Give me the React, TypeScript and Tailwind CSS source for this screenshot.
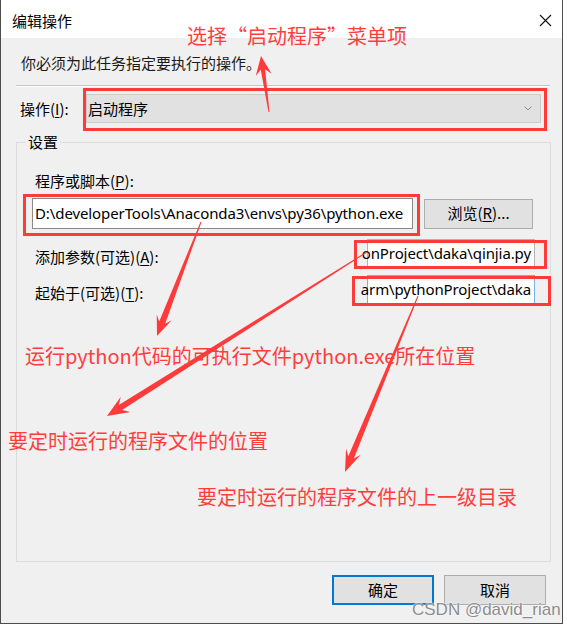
import React from 'react';

const ui = { fontFamily: '"Noto Sans CJK SC", "Noto Sans", sans-serif' };
const latin = { fontFamily: '"Noto Sans", "Noto Sans CJK SC", sans-serif' };

type Pt = [number, number];

// tapered "screenshot tool" arrow, thin tail -> thick head
function arrowPoints(t: Pt, p: Pt, head = 20, hw = 9, w0 = 0.5, w1 = 2.5) {
  const dx = p[0] - t[0];
  const dy = p[1] - t[1];
  const len = Math.hypot(dx, dy);
  const ux = dx / len;
  const uy = dy / len;
  const nx = -uy;
  const ny = ux;
  const neck: Pt = [p[0] - ux * head * 0.72, p[1] - uy * head * 0.72];
  const barb: Pt = [p[0] - ux * head, p[1] - uy * head];
  const pts: Pt[] = [
    [t[0] + nx * w0, t[1] + ny * w0],
    [neck[0] + nx * w1, neck[1] + ny * w1],
    [barb[0] + nx * hw, barb[1] + ny * hw],
    p,
    [barb[0] - nx * hw, barb[1] - ny * hw],
    [neck[0] - nx * w1, neck[1] - ny * w1],
    [t[0] - nx * w0, t[1] - ny * w0],
  ];
  return pts.map((q) => q.join(',')).join(' ');
}

const arrows = [
  { t: [269, 112] as Pt, p: [261, 56] as Pt, head: 19, hw: 8, w1: 2.2 },
  { t: [201, 222] as Pt, p: [157, 336] as Pt, head: 20, hw: 8, w1: 3.2 },
  { t: [367, 252] as Pt, p: [107, 416] as Pt, head: 22, hw: 9, w1: 3 },
  { t: [418, 296] as Pt, p: [345, 472] as Pt, head: 22, hw: 8, w1: 3 },
];

const RedBox = ({ className }: { className: string }) => (
  <span className={`pointer-events-none absolute border-[3px] border-[#ff3a3a] ${className}`} />
);

const Acc = ({ c }: { c: string }) => <u className="underline underline-offset-2">{c}</u>;

export default function App() {
  return (
    <div className="relative w-[567px] h-[625px] bg-white overflow-hidden text-[15px] text-black" style={ui}>
      {/* dialog window */}
      <div className="flex flex-col w-[563px] h-[624px] border-l border-r border-b border-[#4d4d4d]">
        {/* title bar */}
        <div className="flex items-center justify-between h-[38px] bg-white pl-[11px] pr-[10px] pt-[3px] shrink-0">
          <span className="leading-5">编辑操作</span>
          <svg width="13" height="13" viewBox="0 0 13 13">
            <path d="M1 1 L12 12 M12 1 L1 12" stroke="#111" strokeWidth="1.1" />
          </svg>
        </div>

        <div className="flex flex-col flex-1 bg-[#f0f0f0]">
          <p className="pt-[15px] pl-[20px] leading-5 text-[#1a1a1a]">你必须为此任务指定要执行的操作。</p>
          <div className="mt-[12px] ml-[15px] mr-[12px] border-t border-[#c4c4c4] border-b border-b-white" />

          {/* action dropdown */}
          <div className="flex items-center mt-[7px] pl-[19px]">
            <span className="w-[66px] leading-5">操作(<Acc c="I" />):</span>
            <div className="relative flex items-center justify-between w-[455px] h-[29px] bg-[#e1e1e1] border border-[#cccccc] pl-[1px] pr-[8px]">
              <span className="leading-5">启动程序</span>
              <svg width="8" height="5" viewBox="0 0 8 5">
                <path d="M0.5 0.5 L4 4 L7.5 0.5" stroke="#8a8a8a" fill="none" strokeWidth="1" />
              </svg>
              <RedBox className="-left-[4px] -right-[7px] -top-[7px] -bottom-[9px]" />
            </div>
          </div>

          {/* settings group */}
          <fieldset className="mt-[9px] ml-[15px] w-[535px] h-[430px] border border-[#dcdcdc] pt-[19px] shrink-0">
            <legend className="ml-[9px] px-[2px] leading-5">设置</legend>

            <div className="pl-[18px] leading-5">程序或脚本(<Acc c="P" />):</div>

            <div className="flex items-center mt-[7px] pl-[15px]">
              <div className="relative flex items-center w-[381px] h-[31px] bg-white border border-[#8a8a8a] pl-[2px]">
                <span className="whitespace-nowrap tracking-[-0.1px]" style={latin}>
                  D:\developerTools\Anaconda3\envs\py36\python.exe
                </span>
                <RedBox className="-left-[10px] -right-[8px] -top-[5px] -bottom-[8px]" />
              </div>
              <button className="ml-[11px] w-[109px] h-[30px] bg-[#e1e1e1] border border-[#adadad]">
                浏览(<Acc c="R" />)...
              </button>
            </div>

            <div className="flex items-center justify-between mt-[10px] pl-[18px] pr-[15px]">
              <span className="leading-5 mt-[6px]">添加参数(可选)(<Acc c="A" />):</span>
              <div className="relative flex items-center justify-end w-[168px] h-[29px] bg-white border border-[#b4b4b4] pr-[3px]">
                <span className="whitespace-nowrap tracking-[-0.1px]" style={latin}>onProject\daka\qinjia.py</span>
                <RedBox className="-left-[14px] -right-[13px] top-[0px] -bottom-[2px]" />
              </div>
            </div>

            <div className="flex items-center justify-between mt-[7px] pl-[18px] pr-[15px]">
              <span className="leading-5 mt-[6px]">起始于(可选)(<Acc c="T" />):</span>
              <div className="relative flex items-center justify-end w-[168px] h-[29px] bg-white border border-[#7ab0e8] pr-[3px]">
                <span className="whitespace-nowrap tracking-[-0.1px]" style={latin}>arm\pythonProject\daka</span>
                <RedBox className="-left-[16px] -right-[17px] top-[0px] -bottom-[3px]" />
              </div>
            </div>
          </fieldset>

          {/* buttons */}
          <div className="flex justify-end gap-[10px] mt-[13px] pr-[16px]">
            <button className="w-[102px] h-[30px] bg-[#e1e1e1] border-2 border-[#0078d7]">确定</button>
            <button className="w-[102px] h-[30px] bg-[#e1e1e1] border border-[#adadad]">取消</button>
          </div>
        </div>
      </div>

      {/* annotation layer */}
      <div className="pointer-events-none absolute inset-0 text-[20px] leading-7 text-[#ff3d3d]" style={ui}>
        <svg width="567" height="625" className="absolute left-0 top-0">
          {arrows.map((a, i) => (
            <polygon key={i} points={arrowPoints(a.t, a.p, a.head, a.hw, 0.5, a.w1)} fill="#ff3a3a" />
          ))}
        </svg>
        <span className="absolute left-[187px] top-[22px] whitespace-nowrap">选择“启动程序”菜单项</span>
        <span className="absolute left-[25px] top-[342px] whitespace-nowrap">运行python代码的可执行文件python.exe所在位置</span>
        <span className="absolute left-[8px] top-[427px] whitespace-nowrap">要定时运行的程序文件的位置</span>
        <span className="absolute left-[197px] top-[483px] whitespace-nowrap">要定时运行的程序文件的上一级目录</span>
        <span
          className="absolute left-[412px] top-[598px] whitespace-nowrap text-[17px] leading-6 text-[#8c8c8c] [text-shadow:0_0_2px_#fff,0_0_1px_#fff]"
          style={{ fontFamily: '"Liberation Sans", Arial, sans-serif' }}
        >
          CSDN @david_rian
        </span>
      </div>
    </div>
  );
}
